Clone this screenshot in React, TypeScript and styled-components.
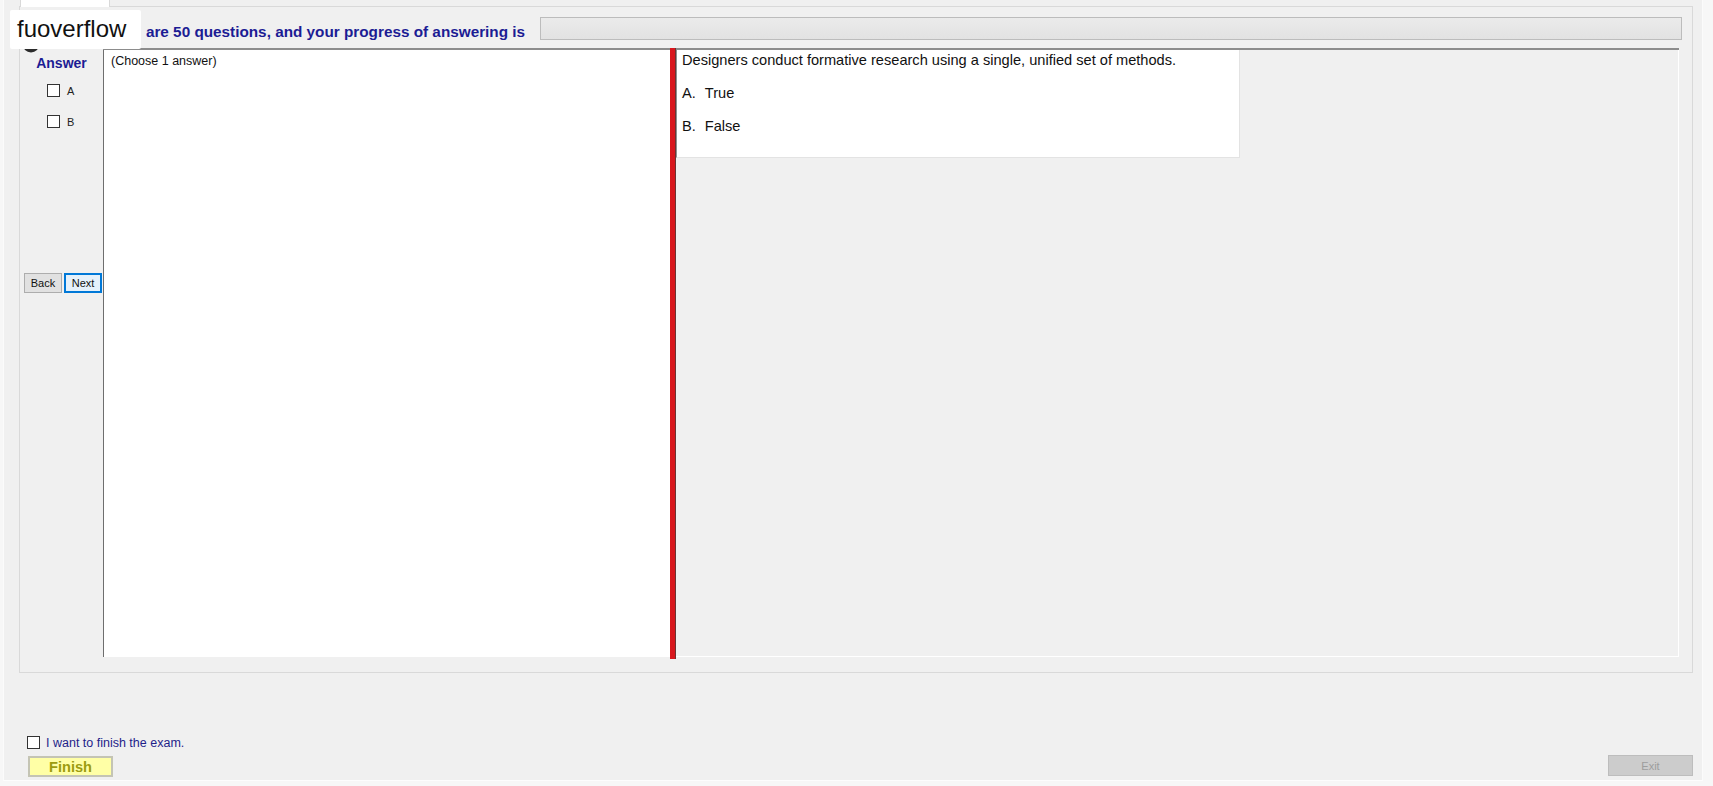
import React from "react";
import styled, { createGlobalStyle } from "styled-components";

const GlobalStyle = createGlobalStyle`
  html, body { margin: 0; padding: 0; background: #f4f4f4; }
  body { font-family: "Liberation Sans", Arial, sans-serif; }
  * { box-sizing: border-box; }
`;

const Screen = styled.div`
  position: relative;
  width: 1713px;
  height: 786px;
  background: #f7f7f7;
  overflow: hidden;
`;

const Window = styled.div`
  margin-left: 3px;
  width: 1700px;
  height: 781px;
  background: #f0f0f0;
  border-left: 1px solid #fbfbfb;
  border-right: 1px solid #fbfbfb;
  border-bottom: 1px solid #fdfdfd;
  display: flex;
  flex-direction: column;
`;

const TabStrip = styled.div`
  height: 6px;
  display: flex;
`;

const Tab = styled.div`
  margin-left: 16px;
  width: 90px;
  height: 7px;
  background: #ffffff;
  border-left: 1px solid #d9d9d9;
  border-right: 1px solid #d9d9d9;
  position: relative;
  z-index: 1;
`;

const TabPage = styled.div`
  margin-left: 15px;
  width: 1674px;
  height: 667px;
  border: 1px solid #d9d9d9;
  background: #f0f0f0;
  display: flex;
  flex-direction: column;
`;

const Header = styled.div`
  height: 41px;
  display: flex;
  align-items: flex-start;
`;

const StatusIcon = styled.svg`
  flex: none;
  margin-left: 2px;
  margin-top: 28px;
`;

const Title = styled.div`
  margin-left: 53px;
  margin-top: 16px;
  line-height: 18px;
  font-size: 15.3px;
  font-weight: bold;
  color: #1c1c94;
  white-space: nowrap;
`;

const TitleLead = styled.span`
  margin-right: 7px;
`;

const ProgressTrack = styled.div`
  flex: 1;
  margin: 10px 10px 0 15px;
  height: 23px;
  background: linear-gradient(#ebebeb, #e2e2e2);
  border: 1px solid #bcbcbc;
`;

const Body = styled.div`
  height: 609px;
  display: flex;
`;

const AnswerColumn = styled.div`
  width: 83px;
  flex: none;
  display: flex;
  flex-direction: column;
`;

const AnswerLabel = styled.div`
  margin-top: 7px;
  line-height: 16px;
  font-size: 14px;
  font-weight: bold;
  color: #1c1c94;
  text-align: center;
`;

const OptionList = styled.div`
  margin-top: 4px;
  display: flex;
  flex-direction: column;
`;

const OptionRow = styled.label`
  height: 31px;
  display: flex;
  align-items: center;
  padding-left: 27px;
  gap: 7px;
  font-size: 11px;
  color: #222;
`;

const Box = styled.span`
  width: 13px;
  height: 13px;
  flex: none;
  background: #ffffff;
  border: 1px solid #333333;
`;

const NavRow = styled.div`
  margin-top: 136px;
  padding-left: 4px;
  display: flex;
  gap: 2px;
`;

const NavButton = styled.button<{ $focused?: boolean }>`
  width: 38px;
  height: 20px;
  padding: 0;
  font-family: "Liberation Sans", Arial, sans-serif;
  font-size: 11px;
  color: #111;
  background: ${(p) => (p.$focused ? "#e5f1fb" : "#e1e1e1")};
  border: 1px solid ${(p) => (p.$focused ? "#0078d7" : "#adadad")};
  box-shadow: ${(p) => (p.$focused ? "inset 0 0 0 1px #0078d7" : "none")};
`;

const ContentFrame = styled.div`
  width: 1576px;
  flex: none;
  display: flex;
  border-top: 2px solid #8c8c8c;
`;

const ChoicePanel = styled.div`
  width: 567px;
  flex: none;
  background: #ffffff;
  border-left: 1px solid #6e6e6e;
  padding: 4px 7px;
  font-size: 12.5px;
  line-height: 14px;
  color: #111;
`;

const Splitter = styled.div`
  width: 6px;
  flex: none;
  margin-top: -2px;
  margin-bottom: -2px;
  background: #d8171d;
  border-right: 1px solid #6a3434;
`;

const RightArea = styled.div`
  flex: 1;
  background: #f0f0f0;
  border-right: 1px solid #ffffff;
  border-bottom: 1px solid #ffffff;
`;

const QuestionCard = styled.div`
  width: 564px;
  height: 108px;
  background: #ffffff;
  border-left: 1px solid #8f8f8f;
  border-right: 1px solid #e3e3e3;
  border-bottom: 1px solid #e3e3e3;
  padding: 2px 0 0 5px;
  font-size: 14.6px;
  line-height: 17px;
  color: #111;
`;

const QuestionLine = styled.div<{ $gap?: number }>`
  margin-top: ${(p) => p.$gap ?? 0}px;
  white-space: nowrap;
`;

const OptionLetter = styled.span`
  margin-right: 9px;
`;

const Footer = styled.div`
  flex: 1;
  display: flex;
  justify-content: space-between;
  align-items: flex-start;
  padding: 0 9px 0 23px;
`;

const FinishBlock = styled.div`
  margin-top: 63px;
  display: flex;
  flex-direction: column;
`;

const ConfirmRow = styled.label`
  height: 13px;
  display: flex;
  align-items: center;
  gap: 6px;
  font-size: 12.5px;
  color: #1f1f8a;
`;

const FinishButton = styled.button`
  margin-top: 7px;
  margin-left: 1px;
  width: 85px;
  height: 21px;
  padding: 0;
  background: #ffffa6;
  border: 2px solid #c4c4b4;
  font-family: "Liberation Sans", Arial, sans-serif;
  font-size: 14.6px;
  font-weight: bold;
  color: #9c9c10;
`;

const ExitButton = styled.button`
  margin-top: 82px;
  width: 85px;
  height: 21px;
  padding: 0;
  background: #cccccc;
  border: 1px solid #bdbdbd;
  font-family: "Liberation Sans", Arial, sans-serif;
  font-size: 11px;
  color: #9d9d9d;
`;

const Watermark = styled.div`
  position: absolute;
  left: 10px;
  top: 10px;
  width: 131px;
  height: 39px;
  background: #ffffff;
  border-radius: 2px;
  padding-left: 7px;
  font-size: 24px;
  line-height: 38px;
  color: #111;
  z-index: 5;
`;

const options = ["A", "B"];

export default function App() {
  return (
    <Screen>
      <GlobalStyle />
      <Window>
        <TabStrip>
          <Tab />
        </TabStrip>
        <TabPage>
          <Header>
            <StatusIcon width="18" height="18" viewBox="0 0 18 18">
              <circle cx="9" cy="9" r="8.5" fill="#2b2b2b" />
            </StatusIcon>
            <Title>
              <TitleLead>There</TitleLead> are 50 questions, and your progress of answering is
            </Title>
            <ProgressTrack />
          </Header>
          <Body>
            <AnswerColumn>
              <AnswerLabel>Answer</AnswerLabel>
              <OptionList>
                {options.map((o) => (
                  <OptionRow key={o}>
                    <Box />
                    {o}
                  </OptionRow>
                ))}
              </OptionList>
              <NavRow>
                <NavButton>Back</NavButton>
                <NavButton $focused>Next</NavButton>
              </NavRow>
            </AnswerColumn>
            <ContentFrame>
              <ChoicePanel>(Choose 1 answer)</ChoicePanel>
              <Splitter />
              <RightArea>
                <QuestionCard>
                  <QuestionLine>
                    Designers conduct formative research using a single, unified set of methods.
                  </QuestionLine>
                  <QuestionLine $gap={16}>
                    <OptionLetter>A.</OptionLetter>True
                  </QuestionLine>
                  <QuestionLine $gap={16}>
                    <OptionLetter>B.</OptionLetter>False
                  </QuestionLine>
                </QuestionCard>
              </RightArea>
            </ContentFrame>
          </Body>
        </TabPage>
        <Footer>
          <FinishBlock>
            <ConfirmRow>
              <Box />I want to finish the exam.
            </ConfirmRow>
            <FinishButton>Finish</FinishButton>
          </FinishBlock>
          <ExitButton>Exit</ExitButton>
        </Footer>
      </Window>
      <Watermark>fuoverflow</Watermark>
    </Screen>
  );
}
